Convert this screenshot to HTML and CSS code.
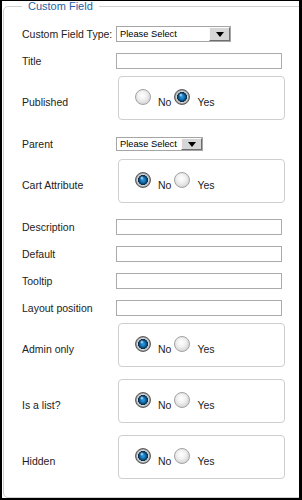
FILE: index.html
```html
<!DOCTYPE html>
<html lang="en">
<head>
  <meta charset="UTF-8" />
  <title>Custom Field</title>
  <link rel="stylesheet" href="styles.css">
</head>
<body>
  <div class="page">
    <fieldset class="panel">
      <legend>Custom Field</legend>
      <div class="fields">

        <div class="row">
          <label class="label">Custom Field Type:</label>
          <div class="select select-wide">
            <span class="select-text">Please Select</span>
            <span class="select-btn"></span>
          </div>
        </div>

        <div class="row">
          <label class="label">Title</label>
          <input type="text" class="text">
        </div>

        <div class="row row-box">
          <label class="label">Published</label>
          <div class="choice">
            <input type="radio" name="published" class="radio">
            <span class="opt opt-no">No</span>
            <input type="radio" name="published" class="radio" checked>
            <span class="opt">Yes</span>
          </div>
        </div>

        <div class="row">
          <label class="label">Parent</label>
          <div class="select select-small">
            <span class="select-text">Please Select</span>
            <span class="select-btn"></span>
          </div>
        </div>

        <div class="row row-box">
          <label class="label">Cart Attribute</label>
          <div class="choice">
            <input type="radio" name="cart" class="radio" checked>
            <span class="opt opt-no">No</span>
            <input type="radio" name="cart" class="radio">
            <span class="opt">Yes</span>
          </div>
        </div>

        <div class="row">
          <label class="label">Description</label>
          <input type="text" class="text">
        </div>

        <div class="row">
          <label class="label">Default</label>
          <input type="text" class="text">
        </div>

        <div class="row">
          <label class="label">Tooltip</label>
          <input type="text" class="text">
        </div>

        <div class="row">
          <label class="label">Layout position</label>
          <input type="text" class="text">
        </div>

        <div class="row row-box">
          <label class="label">Admin only</label>
          <div class="choice">
            <input type="radio" name="admin" class="radio" checked>
            <span class="opt opt-no">No</span>
            <input type="radio" name="admin" class="radio">
            <span class="opt">Yes</span>
          </div>
        </div>

        <div class="row row-box">
          <label class="label">Is a list?</label>
          <div class="choice">
            <input type="radio" name="list" class="radio" checked>
            <span class="opt opt-no">No</span>
            <input type="radio" name="list" class="radio">
            <span class="opt">Yes</span>
          </div>
        </div>

        <div class="row row-box">
          <label class="label">Hidden</label>
          <div class="choice">
            <input type="radio" name="hidden" class="radio" checked>
            <span class="opt opt-no">No</span>
            <input type="radio" name="hidden" class="radio">
            <span class="opt">Yes</span>
          </div>
        </div>

      </div>
    </fieldset>
  </div>
</body>
</html>
```

FILE: styles.css
```css
* {
  box-sizing: border-box;
}

body {
  margin: 0;
  background: #fff;
  font-family: "Liberation Sans", Arial, sans-serif;
  font-size: 10.5px;
  color: #222;
}

.page {
  height: 500px;
  border: solid #000;
  border-width: 1px 3px 2px 2px;
  overflow: hidden;
}

.panel {
  margin: 0 -30px 0 1px;
  padding: 3px 0 13px 18px;
  border: 1px solid #d0d0d0;
  border-radius: 5px;
  min-width: 0;
}

.panel legend {
  padding: 0 6px;
  font-size: 11px;
  line-height: 11px;
  color: #1e63a5;
}

.fields {
  display: flex;
  flex-direction: column;
}

.row {
  display: flex;
  align-items: center;
  min-height: 16px;
  margin-top: 11px;
}

.row-box {
  margin: 7px 0 5px;
}

.label {
  width: 94px;
  flex-shrink: 0;
  line-height: 12px;
}

.row-box .label {
  padding-top: 8px;
}

/* text inputs */
.text {
  width: 166px;
  height: 16px;
  margin: 0;
  padding: 0 3px;
  border: 1px solid #ababab;
  font: inherit;
}

/* fake select boxes */
.select {
  display: flex;
  align-items: stretch;
  height: 16px;
  border: 1px solid #a6a6a6;
  background: #fff;
  font-size: 9.3px;
  color: #000;
}
.select-wide {
  width: 115px;
}
.select-small {
  width: 87px;
  height: 14px;
}
.select-text {
  flex: 1;
  display: flex;
  align-items: center;
  padding-left: 3px;
}
.select-btn {
  width: 21px;
  display: flex;
  align-items: center;
  justify-content: center;
  background: #d6d6d6;
  border: 1px solid;
  border-color: #fafafa #6e6e6e #6e6e6e #fafafa;
}
.select-btn::after {
  content: "";
  width: 0;
  height: 0;
  border-left: 4px solid transparent;
  border-right: 4px solid transparent;
  border-top: 5px solid #000;
}

/* radio group box */
.choice {
  display: flex;
  align-items: center;
  width: 167px;
  height: 44px;
  margin-left: 2px;
  padding-left: 16px;
  border: 1px solid #cfcfcf;
  border-radius: 4px;
}

.radio {
  appearance: none;
  -webkit-appearance: none;
  width: 16px;
  height: 16px;
  margin: -2px 7px 0 0;
  flex-shrink: 0;
  border-radius: 50%;
  border: 1px solid #a2a2a2;
  background: radial-gradient(circle at 45% 40%, #ffffff 0, #f2f2f2 35%, #dadada 70%, #c6c6c6 100%);
}

.radio:checked {
  border-color: #5c5c5c;
  background:
    radial-gradient(circle at 42% 36%, rgba(210, 242, 255, 0.95) 0, rgba(210, 242, 255, 0) 2px),
    radial-gradient(circle, #2f9de0 0, #1672b2 2.5px, #073a63 4.3px, #0a2a44 4.8px, rgba(255, 255, 255, 0) 5.3px),
    radial-gradient(circle, #fbfbfb 0, #eeeeee 5px, #c4c4c4 6px, #8a8a8a 7px);
}

.opt {
  margin-top: 7px;
  margin-right: 7px;
}
.opt-no {
  margin-right: 3px;
}
```
